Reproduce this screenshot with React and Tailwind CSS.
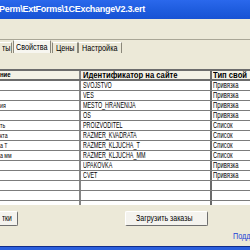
import React from 'react';

const rows = [
  ['', 'SVOJSTVO', 'Привязка'],
  ['', 'VES', 'Привязка'],
  ['ия', 'MESTO_HRANENIJA', 'Привязка'],
  ['', 'OS', 'Привязка'],
  ['ть', 'PROIZVODITEL', 'Список'],
  ['кта', 'RAZMER_KVADRATA', 'Список'],
  ['а Т', 'RAZMER_KLJUCHA_T', 'Список'],
  ['а мм', 'RAZMER_KLJUCHA_MM', 'Список'],
  ['', 'UPAKOVKA', 'Привязка'],
  ['', 'CVET', 'Привязка'],
  ['', '', ''],
  ['', '', ''],
  ['', '', ''],
];

// tab widths are fixed because the label is squeezed with scale-x
const Tab = ({ label, active, className }) => (
  <div
    className={`${className} shrink-0 overflow-hidden flex items-center border-t border-x border-t-white border-x-[#8a877a] ${
      active ? 'h-[13px] bg-[#f7f6f0]' : 'h-[11px]'
    }`}
  >
    <span className="inline-block origin-left scale-x-[0.8] whitespace-nowrap text-[9px] leading-none text-black">
      {label}
    </span>
  </div>
);

const Row = ({ row }) => (
  <div className="flex h-[10px] border-b border-[#7c7c7c] bg-white">
    <div className="w-[81px] shrink-0 border-r-2 border-[#858585] overflow-hidden flex items-center">
      <span className="inline-block origin-left scale-x-[0.65] whitespace-nowrap text-[8px] leading-none">{row[0]}</span>
    </div>
    <div className="w-[131px] shrink-0 border-r-2 border-[#6a6a6a] overflow-hidden flex items-center pl-[2px]">
      <span className="inline-block origin-left scale-x-[0.6] whitespace-nowrap text-[9px] leading-none">{row[1]}</span>
    </div>
    <div className="flex-1 overflow-hidden flex items-center pl-[1px]">
      <span className="inline-block origin-left scale-x-[0.65] whitespace-nowrap text-[9px] leading-none">{row[2]}</span>
    </div>
  </div>
);

export default function App() {
  return (
    <div className="w-[250px] h-[250px] overflow-hidden bg-[#ece9d8] flex flex-col font-['Liberation_Sans',Arial,sans-serif] text-black">
      {/* title bar */}
      <div className="h-[19px] shrink-0 bg-gradient-to-b from-[#2a68ec] via-[#1f5ddf] to-[#1852d4] flex items-center">
        <span className="ml-[-1px] whitespace-nowrap text-white font-bold text-[9px] tracking-[-0.3px] leading-none">
          {'Perm\\ExtForms\\1CExchangeV2.3.ert'}
        </span>
      </div>

      <div className="h-[20px] shrink-0" />

      {/* tabs */}
      <div className="h-[14px] shrink-0 border-t border-[#a9a696] flex items-end">
        <Tab label="ты" className="w-[18px] ml-[-6px] pl-[7px]" />
        <Tab label="Свойства" active className="w-[38px] ml-[1px] pl-[2px]" />
        <Tab label="Цены" className="w-[26px] ml-[1px] pl-[3px]" />
        <Tab label="Настройка" className="w-[44px] pl-[3px]" />
      </div>

      <div className="h-[16px] shrink-0" />

      {/* table */}
      <div className="h-[136px] shrink-0 overflow-hidden border-t-2 border-[#6c6c6c]">
        <div className="flex h-[10px] border-b-2 border-[#6c6c6c] bg-[#f3f1e6]">
          <div className="w-[81px] shrink-0 border-r-2 border-[#858585] overflow-hidden flex items-center">
            <span className="inline-block origin-left scale-x-[0.75] whitespace-nowrap text-[8px] font-bold leading-none">ние</span>
          </div>
          <div className="w-[131px] shrink-0 border-r-2 border-[#6a6a6a] overflow-hidden flex items-center pl-[2px]">
            <span className="inline-block origin-left scale-x-[0.85] whitespace-nowrap text-[9px] font-bold leading-none">
              Идентификатор на сайте
            </span>
          </div>
          <div className="flex-1 overflow-hidden flex items-center pl-[1px]">
            <span className="inline-block origin-left scale-x-[0.85] whitespace-nowrap text-[9px] font-bold leading-none">
              Тип свой
            </span>
          </div>
        </div>
        {rows.map((row, i) => (
          <Row key={i} row={row} />
        ))}
      </div>

      {/* buttons */}
      <div className="h-[15px] shrink-0 mt-[6px] flex">
        <div className="w-[21px] ml-[-3px] h-full bg-[#f4f3ee] border border-t-white border-l-white border-r-[#6f6f6f] border-b-[#6f6f6f] rounded-[2px] flex items-center pl-[4px]">
          <span className="inline-block origin-left scale-x-[0.75] whitespace-nowrap text-[9px] leading-none">тки</span>
        </div>
        <div className="w-[83px] ml-[107px] h-full bg-[#f4f3ee] border border-t-white border-l-white border-r-[#6f6f6f] border-b-[#6f6f6f] rounded-[2px] flex items-center pl-[10px]">
          <span className="inline-block origin-left scale-x-[0.78] whitespace-nowrap text-[9px] leading-none">Загрузить заказы</span>
        </div>
      </div>

      {/* link */}
      <div className="h-[20px] shrink-0 flex items-center pl-[233px] overflow-hidden">
        <span className="inline-block origin-left scale-x-[0.8] whitespace-nowrap text-[9px] leading-none text-[#1a3fd6]">Подд</span>
      </div>

      {/* bottom strip */}
      <div className="flex-1 border-t border-[#102c8a] bg-[#2a5fdc]" />
    </div>
  );
}
